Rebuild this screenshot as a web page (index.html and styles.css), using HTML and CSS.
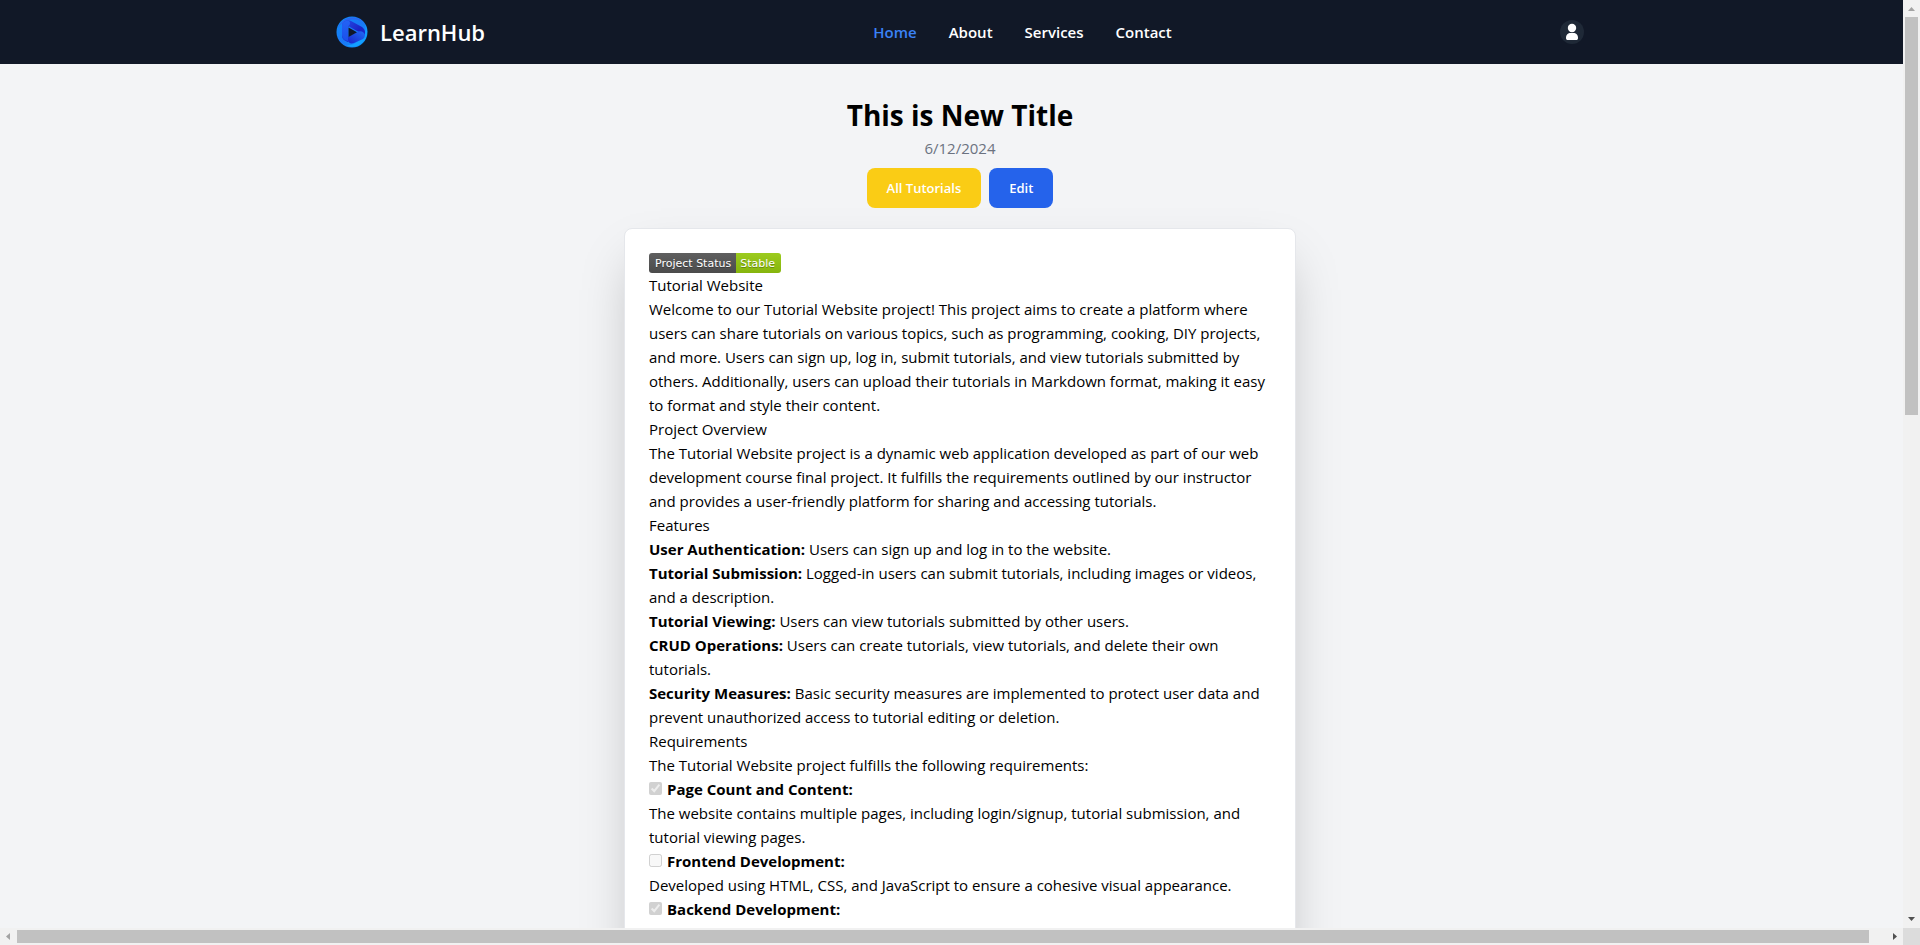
FILE: index.html
```html
<!DOCTYPE html>
<html lang="en">
<head>
<meta charset="utf-8">
<title>LearnHub</title>
<link rel="stylesheet" href="styles.css">
</head>
<body>
<div class="window">
  <div class="viewport">
    <div class="page">
      <header class="navbar">
        <div class="navbar-inner">
          <a class="brand" href="#">
            <svg class="brand-logo" viewBox="0 0 32 32" aria-hidden="true">
              <defs>
                <linearGradient id="ring" x1="0" y1="0" x2="1" y2="1">
                  <stop offset="0" stop-color="#0b8cfb"/><stop offset=".5" stop-color="#1a78f5"/><stop offset="1" stop-color="#0a96ff"/>
                </linearGradient>
                <linearGradient id="foldA" x1="0" y1="0" x2="1" y2="1">
                  <stop offset="0" stop-color="#2450ea"/><stop offset=".6" stop-color="#1b22c4"/><stop offset="1" stop-color="#1c30d4"/>
                </linearGradient>
                <linearGradient id="foldB" x1="0" y1="1" x2="1" y2="0">
                  <stop offset="0" stop-color="#1a23c8"/><stop offset="1" stop-color="#1f6df6"/>
                </linearGradient>
                <linearGradient id="foldC" x1="0" y1="0" x2="0" y2="1">
                  <stop offset="0" stop-color="#2463f4"/><stop offset="1" stop-color="#1a50ea"/>
                </linearGradient>
              </defs>
              <circle cx="16" cy="16" r="15.5" fill="url(#ring)"/>
              <path d="M2 12C8 3 18 2 26 5 20-1 6 0 2 12Z" fill="#2a66f0"/>
              <path d="M29 8c4 7 2 15-3 19-4 4-11 5-16 2 6 1 10-2 13-5 5-4 8-8 6-16Z" fill="#12a0ff"/>
              <path d="M6 10c0-5 5-7 9-5l11 6c4 3 4 7 1 11-1-4-3-6-6-7l-7-4c-1-1-2 0-2 1v14c-3-1-6-3-6-6Z" fill="url(#foldA)"/>
              <path d="M6 10c0-3 2-5 5-5.500 3 0 4 3 2 5-1 .5-1 1-1 2.500v13c-3 0-6-3-6-6Z" fill="url(#foldC)"/>
              <path d="M12 21l9-5c4-2 7 0 8 3 0 2-1 3-2 4l-9 4c-3 1-6 0-6-3Z" fill="url(#foldB)"/>
              <path d="M12.500 11.500v9.500l8.500-4.800Z" fill="#10172a"/>
            </svg>
            <span>LearnHub</span>
          </a>
          <nav class="links">
            <a class="link link-active" href="#">Home</a>
            <a class="link" href="#">About</a>
            <a class="link" href="#">Services</a>
            <a class="link" href="#">Contact</a>
          </nav>
          <button class="user" type="button" aria-label="Account">
            <svg viewBox="0 0 24 24" aria-hidden="true">
              <circle cx="12" cy="8" r="4.200" fill="#fff"/>
              <path d="M6 18c0-3.500 2-5 4.500-5h3c2.500 0 4.500 1.500 4.500 5 0 1.500-.6 2-2 2H8c-1.400 0-2-.5-2-2Z" fill="#fff"/>
            </svg>
          </button>
        </div>
      </header>
      <main class="main">
        <h1 class="title">This is New Title</h1>
        <p class="date">6/12/2024</p>
        <div class="actions">
          <button class="btn btn-yellow" type="button">All Tutorials</button>
          <button class="btn btn-blue" type="button">Edit</button>
        </div>
        <article class="card">
          <div class="badge"><span class="badge-name">Project Status</span><span class="badge-value">Stable</span></div>
          <h2>Tutorial Website</h2>
          <p>Welcome to our Tutorial Website project! This project aims to create a platform where<br>users can share tutorials on various topics, such as programming, cooking, DIY projects,<br>and more. Users can sign up, log in, submit tutorials, and view tutorials submitted by<br>others. Additionally, users can upload their tutorials in Markdown format, making it easy<br>to format and style their content.</p>
          <h2>Project Overview</h2>
          <p>The Tutorial Website project is a dynamic web application developed as part of our web<br>development course final project. It fulfills the requirements outlined by our instructor<br>and provides a user-friendly platform for sharing and accessing tutorials.</p>
          <h2>Features</h2>
          <ul>
            <li><strong>User Authentication:</strong> Users can sign up and log in to the website.</li>
            <li><strong>Tutorial Submission:</strong> Logged-in users can submit tutorials, including images or videos,<br>and a description.</li>
            <li><strong>Tutorial Viewing:</strong> Users can view tutorials submitted by other users.</li>
            <li><strong>CRUD Operations:</strong> Users can create tutorials, view tutorials, and delete their own<br>tutorials.</li>
            <li><strong>Security Measures:</strong> Basic security measures are implemented to protect user data and<br>prevent unauthorized access to tutorial editing or deletion.</li>
          </ul>
          <h2>Requirements</h2>
          <p>The Tutorial Website project fulfills the following requirements:</p>
          <ul>
            <li><label class="task"><input type="checkbox" checked disabled><strong>Page Count and Content:</strong></label>
              <p>The website contains multiple pages, including login/signup, tutorial submission, and<br>tutorial viewing pages.</p></li>
            <li><label class="task"><input type="checkbox" disabled><strong>Frontend Development:</strong></label>
              <p>Developed using HTML, CSS, and JavaScript to ensure a cohesive visual appearance.</p></li>
            <li><label class="task"><input type="checkbox" checked disabled><strong>Backend Development:</strong></label>
              <p>Backend functionality includes database integration and data handling for tutorials and</p></li>
          </ul>
        </article>
      </main>
    </div>
  </div>
  <div class="bar bar-v" aria-hidden="true">
    <svg class="arrow" viewBox="0 0 17 17"><path d="M5 11h7L8.500 7Z" fill="#a3a3a3"/></svg>
    <div class="track"><div class="thumb"></div></div>
    <svg class="arrow" viewBox="0 0 17 17"><path d="M5 6h7L8.500 10Z" fill="#505050"/></svg>
  </div>
  <div class="bar bar-h" aria-hidden="true">
    <svg class="arrow" viewBox="0 0 17 17"><path d="M10 5v7L6 8.500Z" fill="#a3a3a3"/></svg>
    <div class="track"><div class="thumb"></div></div>
    <svg class="arrow" viewBox="0 0 17 17"><path d="M7 5v7l4-3.500Z" fill="#505050"/></svg>
  </div>
  <div class="corner"></div>
</div>
</body>
</html>
```
FILE: styles.css
```css
* { box-sizing: border-box; margin: 0; padding: 0; }

body {
  font-family: "Open Sans", "Noto Sans", sans-serif;
  font-size: 15px;
  line-height: 24px;
  color: #000;
  background: #f3f4f6;
  overflow: hidden;
}

h2 { font-size: inherit; font-weight: 400; }
strong { font-weight: 700; }
ul { list-style: none; }
a { color: inherit; text-decoration: none; }
button { border: 0; font: inherit; cursor: pointer; }

.window {
  display: grid;
  grid-template-columns: minmax(0, 1fr) 17px;
  grid-template-rows: minmax(0, 1fr) 17px;
  height: 100vh;
}
.viewport { overflow: hidden; }
.page { width: 100vw; }

.navbar { background: #111827; color: #fff; }
.navbar-inner {
  display: flex;
  justify-content: space-between;
  align-items: center;
  max-width: 1280px;
  height: 64px;
  margin: 0 auto;
  padding: 0 16px;
}
.brand {
  display: flex;
  align-items: center;
  gap: 12px;
  font-size: 22px;
  font-weight: 600;
}
.brand-logo { width: 32px; height: 32px; }
.links { display: flex; gap: 32px; }
.link { font-weight: 600; }
.link-active { color: #3b82f6; }
.user {
  width: 24px;
  height: 24px;
  border-radius: 50%;
  background: #1f2937;
}
.user svg { display: block; width: 24px; height: 24px; }

.main {
  display: flex;
  flex-direction: column;
  align-items: center;
  padding: 32px 16px;
}
.title { margin-bottom: 2px; font-size: 28px; line-height: 38px; font-weight: 700; }
.date { color: #6b7280; }
.actions { display: flex; gap: 8px; margin: 8px 0 20px; }
.btn {
  height: 40px;
  padding: 0 20px;
  border-radius: 8px;
  color: #fff;
  font-size: 13px;
  font-weight: 600;
}
.btn-yellow { background: #facc15; }
.btn-blue { background: #2563eb; }

.card {
  width: 100%;
  max-width: 672px;
  padding: 24px;
  border: 1px solid #e5e7eb;
  border-radius: 8px;
  background: #fff;
  box-shadow: 0 25px 50px -12px rgba(0, 0, 0, .25);
  white-space: nowrap;
}
.badge {
  display: flex;
  width: max-content;
  height: 20px;
  border-radius: 3px;
  overflow: hidden;
  color: #fff;
  font: 11px/21px "DejaVu Sans", sans-serif;
  text-shadow: 0 1px 0 rgba(1, 1, 1, .3);
}
.badge-name { padding: 0 5px 0 6px; background: linear-gradient(#5f5f5f, #4b4b4b); }
.badge-value { padding: 0 6px 0 4px; background: linear-gradient(#9ccb1e, #86b50d); }
.task { display: flex; align-items: center; gap: 5px; }
.task input { width: 13px; height: 13px; margin-bottom: 2px; }

.bar { display: flex; background: #f1f1f1; }
.bar-v { flex-direction: column; }
.bar-h { grid-column: 1; }
.arrow { flex: none; width: 17px; height: 17px; }
.track { display: flex; flex: 1; }
.bar-v .track { flex-direction: column; padding: 0 2px; }
.bar-h .track { padding: 2px 0; }
.thumb { background: #c1c1c1; }
.bar-v .thumb { height: 44.500%; }
.bar-h .thumb { width: 99.100%; }
.corner { background: #dcdcdc; }
```
